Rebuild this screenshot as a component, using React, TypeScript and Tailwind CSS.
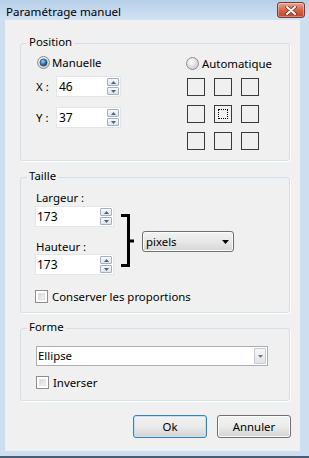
import React from "react";

function Radio({ checked }: { checked?: boolean }) {
  return (
    <svg width="13" height="13" viewBox="0 0 13 13" className="shrink-0">
      <defs>
        <radialGradient id={checked ? "rg1" : "rg2"} cx="0.4" cy="0.35" r="0.7">
          <stop offset="0" stopColor="#fdfdfd" />
          <stop offset="1" stopColor="#c9c9c9" />
        </radialGradient>
        <radialGradient id="rdot" cx="0.4" cy="0.35" r="0.7">
          <stop offset="0" stopColor="#9fd4f7" />
          <stop offset="0.6" stopColor="#2c72ad" />
          <stop offset="1" stopColor="#17426b" />
        </radialGradient>
      </defs>
      <circle cx="6.5" cy="6.5" r="6" fill={`url(#${checked ? "rg1" : "rg2"})`} stroke="#8c8f93" strokeWidth="1" />
      {checked && <circle cx="6.5" cy="6.5" r="3.6" fill="url(#rdot)" stroke="#1c3d5e" strokeWidth="0.6" />}
    </svg>
  );
}

function Checkbox() {
  return (
    <div className="h-[13px] w-[13px] shrink-0 border border-[#8f8f8f] bg-white p-[2px]">
      <div className="h-full w-full border border-[#e2e2e2] bg-gradient-to-br from-[#d6d6d6] to-[#f6f6f6]" />
    </div>
  );
}

function Tri({ up, color = "#4d6185" }: { up?: boolean; color?: string }) {
  return (
    <svg width="5" height="3" viewBox="0 0 5 3">
      <polygon points={up ? "0,3 5,3 2.5,0" : "0,0 5,0 2.5,3"} fill={color} />
    </svg>
  );
}

function SpinBtn({ up }: { up?: boolean }) {
  return (
    <div className="flex h-[8px] w-[12px] items-center justify-center rounded-[1px] border border-[#a7b1bd] bg-gradient-to-b from-[#f7f8fa] to-[#dfe4ea]">
      <Tri up={up} />
    </div>
  );
}

function Spin({ value, w, pl }: { value: string; w: string; pl: string }) {
  return (
    <div className={`flex h-[21px] ${w} items-center border border-[#e2e6eb] bg-white`}>
      <span className={`flex-1 ${pl} text-[12px] leading-[19px]`}>{value}</span>
      <div className="mr-[1px] flex flex-col gap-[1px]">
        <SpinBtn up />
        <SpinBtn />
      </div>
    </div>
  );
}

function Group({ label, h, mt, children }: { label: string; h: string; mt: string; children: React.ReactNode }) {
  return (
    <div className={`relative ml-[15px] ${mt} ${h} w-[270px] rounded-[3px] border border-[#d5dfe5] shadow-[1px_1px_0_#ffffff]`}>
      <span className="absolute left-[6px] top-[-10px] bg-[#f0f0f0] px-[2px] leading-[16px]">{label}</span>
      {children}
    </div>
  );
}

function Cell({ focus }: { focus?: boolean }) {
  return (
    <div className="h-[18px] w-[18px] border border-[#3a3a3a] bg-[#f0f0f0] p-[3px]">
      {focus && <div className="h-full w-full border border-dotted border-black" />}
    </div>
  );
}

export default function App() {
  return (
    <div className="flex h-[458px] w-[309px] flex-col bg-[#cddef0] font-['Noto_Sans',sans-serif] text-[11.4px] text-black">
      {/* title bar */}
      <div className="flex h-[20px] shrink-0 items-start justify-between bg-gradient-to-b from-[#b6cfe9] to-[#d2e2f3] pl-[6px]">
        <span className="text-[11.6px] leading-[23px]">Paramétrage manuel</span>
        <div className="mr-[4px] mt-[2px] flex h-[16px] w-[28px] items-center justify-center rounded-[3px] border border-[#7a3a2e] bg-gradient-to-b from-[#e8a595] via-[#d4644a] to-[#c0432a] shadow-[inset_0_0_0_1px_rgba(255,255,255,0.35)]">
          <svg width="12" height="9" viewBox="0 0 12 9">
            <path d="M2 1 L10 8 M10 1 L2 8" stroke="#6b2a1e" strokeWidth="3.4" strokeLinecap="round" />
            <path d="M2 1 L10 8 M10 1 L2 8" stroke="#ffffff" strokeWidth="2" strokeLinecap="round" />
          </svg>
        </div>
      </div>

      {/* client row */}
      <div className="flex flex-1">
        <div className="ml-[5px] mr-[9px] mb-[5px] flex flex-1 flex-col bg-[#f0f0f0]">
          {/* Position */}
          <Group label="Position" h="h-[118px]" mt="mt-[23px]">
            <div className="flex pl-[16px] pt-[12px]">
              <div className="w-[149px]">
                <div className="flex h-[13px] items-center gap-[2px]">
                  <Radio checked />
                  <span className="leading-[15px]">Manuelle</span>
                </div>
                <div className="mt-[7px] flex h-[21px] items-center">
                  <span className="-ml-[1px] w-[20px]">X :</span>
                  <Spin value="46" w="w-[65px]" pl="pl-[2px]" />
                </div>
                <div className="mt-[10px] flex h-[21px] items-center">
                  <span className="-ml-[1px] w-[20px]">Y :</span>
                  <Spin value="37" w="w-[65px]" pl="pl-[2px]" />
                </div>
              </div>
              <div className="pt-[1px]">
                <div className="flex h-[13px] items-center gap-[3px]">
                  <Radio />
                  <span className="leading-[15px]">Automatique</span>
                </div>
                <div className="ml-[1px] mt-[8px] grid w-max grid-cols-3 gap-[9px]">
                  <Cell />
                  <Cell />
                  <Cell />
                  <Cell />
                  <Cell focus />
                  <Cell />
                  <Cell />
                  <Cell />
                  <Cell />
                </div>
              </div>
            </div>
          </Group>

          {/* Taille */}
          <Group label="Taille" h="h-[136px]" mt="mt-[16px]">
            <div className="pl-[14px] pt-[12px]">
              <div className="flex items-start">
                <div className="w-[79px]">
                  <div className="h-[15px] pl-[1px] leading-[15px]">Largeur :</div>
                  <div className="mt-[1px]">
                    <Spin value="173" w="w-[79px]" pl="pl-[1px]" />
                  </div>
                  <div className="mt-[12px] h-[15px] pl-[1px] leading-[15px]">Hauteur :</div>
                  <Spin value="173" w="w-[79px]" pl="pl-[1px]" />
                </div>
                <svg width="13" height="53" viewBox="0 0 13 53" className="ml-[7px] mt-[24px]">
                  <path d="M0 1.5 H7.5 V51.5 H0" fill="none" stroke="#000" strokeWidth="3" />
                  <path d="M7.5 27 H13" stroke="#000" strokeWidth="3" />
                </svg>
                <div className="ml-[8px] mt-[41px] flex h-[21px] w-[92px] items-center justify-between rounded-[3px] border border-[#707070] bg-gradient-to-b from-[#f3f3f3] via-[#e8e8e8] to-[#d5d5d5] pl-[3px] pr-[4px] shadow-[inset_0_0_0_1px_#fbfbfb]">
                  <span className="leading-[19px]">pixels</span>
                  <svg width="7" height="4" viewBox="0 0 7 4">
                    <polygon points="0,0 7,0 3.5,4" fill="#000" />
                  </svg>
                </div>
              </div>
              <div className="mt-[15px] flex h-[13px] items-center gap-[4px]">
                <Checkbox />
                <span className="leading-[15px]">Conserver les proportions</span>
              </div>
            </div>
          </Group>

          {/* Forme */}
          <Group label="Forme" h="h-[73px]" mt="mt-[15px]">
            <div className="pl-[15px] pt-[17px]">
              <div className="flex h-[20px] w-[232px] items-center justify-between border border-[#abadb3] bg-white pl-[1px] pr-[1px]">
                <span className="leading-[18px]">Ellipse</span>
                <div className="flex h-[16px] w-[12px] items-center justify-center rounded-[1px] border border-[#c5cbd2] bg-gradient-to-b from-[#f6f7f8] to-[#e0e3e7]">
                  <Tri color="#6b7a8f" />
                </div>
              </div>
              <div className="mt-[10px] flex h-[13px] items-center gap-[4px]">
                <Checkbox />
                <span className="leading-[15px]">Inverser</span>
              </div>
            </div>
          </Group>

          {/* Buttons */}
          <div className="mt-[14px] flex justify-end gap-[10px] pr-[9px]">
            <div className="flex h-[23px] w-[74px] items-center justify-center rounded-[3px] border border-[#3c7fb1] bg-gradient-to-b from-[#f2f2f2] via-[#ebebeb] to-[#d3d3d3] shadow-[inset_0_0_0_1px_#bfe2f8]">
              Ok
            </div>
            <div className="flex h-[23px] w-[74px] items-center justify-center rounded-[3px] border border-[#707070] bg-gradient-to-b from-[#f2f2f2] via-[#ebebeb] to-[#d3d3d3] shadow-[inset_0_0_0_1px_#fbfbfb]">
              Annuler
            </div>
          </div>
        </div>
      </div>
      <div className="h-[2px] shrink-0 bg-[#4a5d70]" />
    </div>
  );
}
